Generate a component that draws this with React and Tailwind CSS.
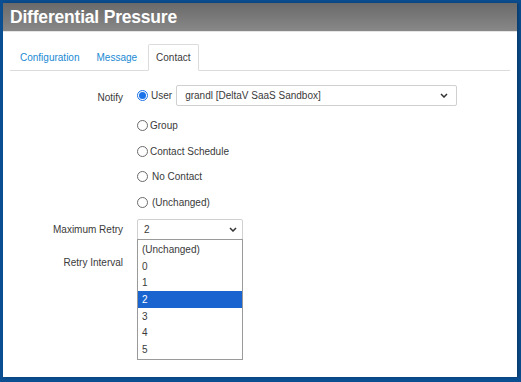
import React from 'react';

const Radio = ({ checked }) => (
  <span
    className={`inline-flex items-center justify-center w-[11px] h-[11px] rounded-full border ${
      checked ? 'border-[#1a73e8]' : 'border-[#6b6b6b]'
    } bg-white`}
  >
    {checked && <span className="w-[7px] h-[7px] rounded-full bg-[#1a73e8]" />}
  </span>
);

const Chevron = () => (
  <svg width="8" height="5" viewBox="0 0 8 5" className="text-[#333]">
    <path d="M1 1l3 3 3-3" fill="none" stroke="currentColor" strokeWidth="1.5" />
  </svg>
);

const RadioRow = ({ label, checked, gap = 'gap-[2px]' }) => (
  <div className={`flex items-center ${gap}`}>
    <Radio checked={checked} />
    <span>{label}</span>
  </div>
);

const retryOptions = ['(Unchanged)', '0', '1', '2', '3', '4', '5'];

export default function App() {
  return (
    <div
      className="w-[521px] h-[382px] bg-[#0b4e91] pt-[3px] pl-[3px] pr-[4px] pb-[5px] text-[10px] text-[#3a3a3a]"
      style={{ fontFamily: '"Liberation Sans", Arial, sans-serif' }}
    >
      <div className="h-full bg-white flex flex-col shadow-[2px_0_3px_rgba(0,0,0,0.25)]">
        {/* Header */}
        <div className="h-[29px] bg-gradient-to-b from-[#6a6a6a] to-[#888] flex items-center pl-[7px] border-b border-[#e5e5e5]">
          <span className="text-white font-bold text-[17.5px] tracking-[-0.2px]">Differential Pressure</span>
        </div>

        {/* Tabs */}
        <div className="mt-[12px] mx-[7px] flex items-end border-b border-[#dcdcdc] h-[27px]">
          <div className="pl-[10px] pr-[17px] h-full flex items-center text-[#1a8ad3]">Configuration</div>
          <div className="pr-[11px] h-full flex items-center text-[#1a8ad3]">Message</div>
          <div className="px-[7px] h-[27px] mb-[-1px] flex items-center border border-[#dcdcdc] border-b-white bg-white rounded-t-[2px]">
            Contact
          </div>
        </div>

        {/* Form */}
        <div className="flex flex-col mt-[14px]">
          <div className="flex">
            <div className="w-[120px] text-right pt-[5px]">Notify</div>
            <div className="ml-[14px] flex flex-col">
              <div className="flex items-center h-[21px]">
                <RadioRow label="User" checked gap="gap-[3px]" />
                <div className="ml-[4px] w-[281px] h-[21px] border border-[#d0d0d0] rounded-[2px] flex items-center justify-between pl-[8px] pr-[8px]">
                  <span>grandl [DeltaV SaaS Sandbox]</span>
                  <Chevron />
                </div>
              </div>
              <div className="mt-[12px] h-[14px] flex items-center">
                <RadioRow label="Group" />
              </div>
              <div className="mt-[12px] h-[14px] flex items-center">
                <RadioRow label="Contact Schedule" />
              </div>
              <div className="mt-[11px] h-[14px] flex items-center">
                <RadioRow label="No Contact" gap="gap-[4px]" />
              </div>
              <div className="mt-[12px] h-[14px] flex items-center">
                <RadioRow label="(Unchanged)" gap="gap-[4px]" />
              </div>
            </div>
          </div>

          <div className="flex mt-[10px]">
            <div className="w-[120px] text-right flex flex-col">
              <div className="h-[21px] flex items-center justify-end">Maximum Retry</div>
              <div className="mt-[15px]">Retry Interval</div>
            </div>
            <div className="ml-[14px] relative w-[106px]">
              <div className="h-[21px] border border-[#d0d0d0] rounded-[2px] flex items-center justify-between pl-[6px] pr-[5px]">
                <span>2</span>
                <Chevron />
              </div>
              <div className="absolute left-0 top-[20px] w-[106px] bg-white border border-[#9a9a9a] py-[1px]">
                {retryOptions.map((o) => (
                  <div
                    key={o}
                    className={`h-[16.7px] flex items-center pl-[4px] ${
                      o === '2' ? 'bg-[#1a64d0] text-white' : ''
                    }`}
                  >
                    {o}
                  </div>
                ))}
              </div>
            </div>
          </div>
        </div>
      </div>
    </div>
  );
}
